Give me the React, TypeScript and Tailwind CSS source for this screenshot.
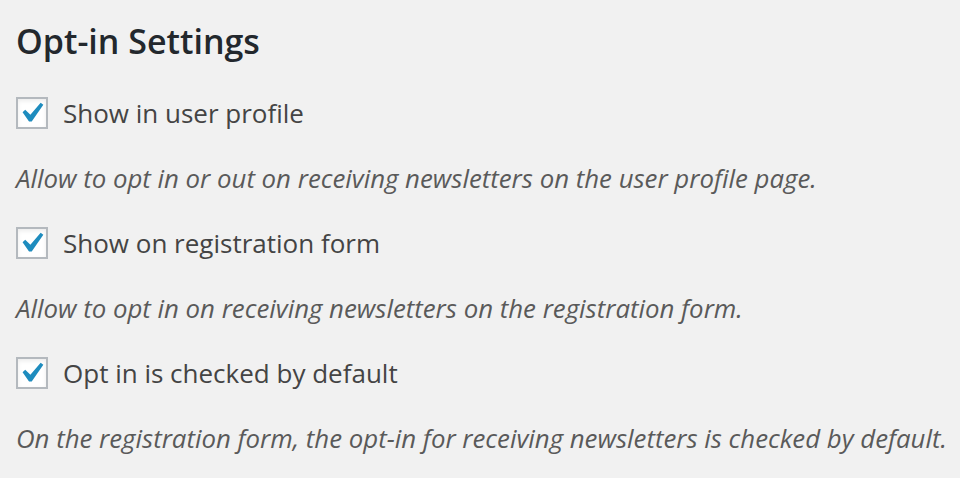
import React from "react";

type Option = {
  label: string;
  description: string;
};

const options: Option[] = [
  {
    label: "Show in user profile",
    description: "Allow to opt in or out on receiving newsletters on the user profile page.",
  },
  {
    label: "Show on registration form",
    description: "Allow to opt in on receiving newsletters on the registration form.",
  },
  {
    label: "Opt in is checked by default",
    description:
      "On the registration form, the opt-in for receiving newsletters is checked by default.",
  },
];

const Checkbox = () => (
  <span className="relative block w-[32px] h-[32px] shrink-0 border-2 border-[#b4b9be] bg-white shadow-[inset_0_2px_4px_rgba(0,0,0,0.08)]">
    <svg
      viewBox="0 0 20 20"
      className="absolute left-[-7px] top-[-6px] w-[40px] h-[40px]"
      fill="#1e8cbe"
    >
      <path d="M14.83 4.89l1.34.94-5.81 8.38H9.02L5.78 9.67l1.34-1.25 2.57 2.4z" />
    </svg>
  </span>
);

export default function App() {
  return (
    <div
      className="w-[960px] h-[478px] bg-[#f1f1f1] px-4 overflow-hidden"
      style={{ fontFamily: '"Open Sans", "Noto Sans", sans-serif' }}
    >
      <h2 className="pt-[20px] text-[34px] leading-[42px] font-semibold text-[#23282d]">
        Opt-in Settings
      </h2>

      <div className="mt-[35px] flex flex-col gap-[29px]">
        {options.map((opt) => (
          <React.Fragment key={opt.label}>
            <label className="flex items-center gap-[15px] h-[32px]">
              <Checkbox />
              <span className="text-[26px] leading-[32px] text-[#444]">{opt.label}</span>
            </label>
            <p className="text-[25.8px] leading-[40px] italic text-[#5a5a5a] whitespace-nowrap">
              {opt.description}
            </p>
          </React.Fragment>
        ))}
      </div>
    </div>
  );
}
